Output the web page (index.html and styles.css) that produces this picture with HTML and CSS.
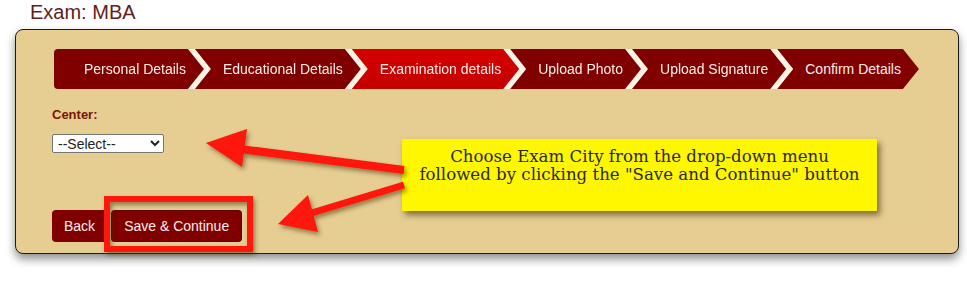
FILE: index.html
```html
<!DOCTYPE html>
<html lang="en">
<head>
<meta charset="utf-8">
<title>Exam: MBA</title>
<link rel="stylesheet" href="styles.css">
</head>
<body>
<div class="page">
  <h1 class="title">Exam: MBA</h1>
  <div class="panel">
    <ol class="steps">
      <li class="step first"><span class="shape">Personal Details</span></li>
      <li class="step"><span class="shape">Educational Details</span></li>
      <li class="step active"><span class="shape">Examination details</span></li>
      <li class="step"><span class="shape">Upload Photo</span></li>
      <li class="step"><span class="shape">Upload Signature</span></li>
      <li class="step last"><span class="shape">Confirm Details</span></li>
    </ol>
    <div class="field">
      <label class="label" for="center">Center:</label>
      <select class="select" id="center"><option>--Select--</option></select>
    </div>
    <div class="actions">
      <button class="btn">Back</button>
      <button class="btn btn-save">Save &amp; Continue</button>
    </div>
  </div>
  <div class="callout">Choose Exam City from the drop-down menu<br>followed by clicking the "Save and Continue" button</div>
  <svg class="annot" width="967" height="293" viewBox="0 0 967 293" aria-hidden="true">
    <defs>
      <filter id="sh" x="-20%" y="-20%" width="140%" height="140%">
        <feDropShadow dx="2" dy="3" stdDeviation="2" flood-color="#3a2a00" flood-opacity="0.5"/>
      </filter>
    </defs>
    <g filter="url(#sh)" fill="#ff1208" stroke="#ff1208">
      <line x1="240" y1="149" x2="404" y2="170" stroke-width="8"/>
      <polygon points="206,143 247,129 242,167" stroke="none"/>
      <line x1="305" y1="215" x2="404" y2="185" stroke-width="7"/>
      <polygon points="278,224 308,195 318,232" stroke="none"/>
      <rect x="107" y="199" width="143" height="50" fill="none" stroke-width="6"/>
    </g>
  </svg>
</div>
</body>
</html>
```
FILE: styles.css
```css
html, body {
  margin: 0;
  padding: 0;
  background: #ffffff;
}

.page {
  position: relative;
  width: 967px;
  height: 293px;
  overflow: hidden;
  font-family: "Liberation Sans", Arial, sans-serif;
}

.title {
  margin: 0;
  padding: 0 0 0 30px;
  font: normal 20px/24px "Liberation Sans", Arial, sans-serif;
  color: #62201d;
}

.panel {
  box-sizing: border-box;
  margin: 5px 0 0 15px;
  width: 944px;
  height: 225px;
  padding: 19px 0 0 36px;
  background: #e6cd91;
  border: 1px solid #1c1c1c;
  border-radius: 8px;
  box-shadow: 0 5px 10px rgba(0, 0, 0, 0.45);
}

.steps {
  display: flex;
  list-style: none;
  margin: 0 0 0 2px;
  padding: 0;
  height: 40px;
}

.step {
  filter: drop-shadow(7px 0 0 #fff3e6);
}

.step + .step {
  margin-left: -9px;
}

.step.last {
  filter: none;
}

.shape {
  display: block;
  height: 40px;
  line-height: 40px;
  padding: 0 18px 0 28px;
  background: #800000;
  color: #fbeee8;
  font-size: 14px;
  white-space: nowrap;
  clip-path: polygon(0 0, calc(100% - 16px) 0, 100% 50%, calc(100% - 16px) 100%, 0 100%, 16px 50%);
}

.first .shape {
  padding-left: 30px;
  border-radius: 4px 0 0 4px;
  clip-path: polygon(0 0, calc(100% - 16px) 0, 100% 50%, calc(100% - 16px) 100%, 0 100%);
}

.active .shape {
  background: linear-gradient(#d60000, #c40000);
}

.field {
  margin-top: 18px;
}

.label {
  display: block;
  font-weight: bold;
  font-size: 13px;
  line-height: 15px;
  color: #7a1606;
}

.select {
  display: block;
  box-sizing: border-box;
  margin-top: 12px;
  width: 112px;
  height: 19px;
  padding: 0 0 0 1px;
  font: 14px "Liberation Sans", Arial, sans-serif;
  color: #222;
  background: #ffffff;
  border: 1px solid #767676;
  border-radius: 2px;
}

.actions {
  display: flex;
  gap: 4px;
  margin-top: 57px;
}

.btn {
  height: 32px;
  padding: 0 12px;
  border: none;
  border-radius: 4px;
  background: #800000;
  color: #fbeee8;
  font: 14px "Liberation Sans", Arial, sans-serif;
}

.btn-save {
  padding: 0 13px;
  box-shadow: inset 0 0 0 1px rgba(0, 0, 0, 0.25);
}

.callout {
  position: absolute;
  left: 402px;
  top: 139px;
  box-sizing: border-box;
  width: 475px;
  height: 72px;
  padding-top: 9px;
  background: #fff700;
  color: #2a2a2a;
  text-align: center;
  font: 16.6px/18px "DejaVu Serif", "Liberation Serif", serif;
  box-shadow: 3px 4px 6px rgba(60, 40, 0, 0.6);
}

.annot {
  position: absolute;
  left: 0;
  top: 0;
  pointer-events: none;
}
```
